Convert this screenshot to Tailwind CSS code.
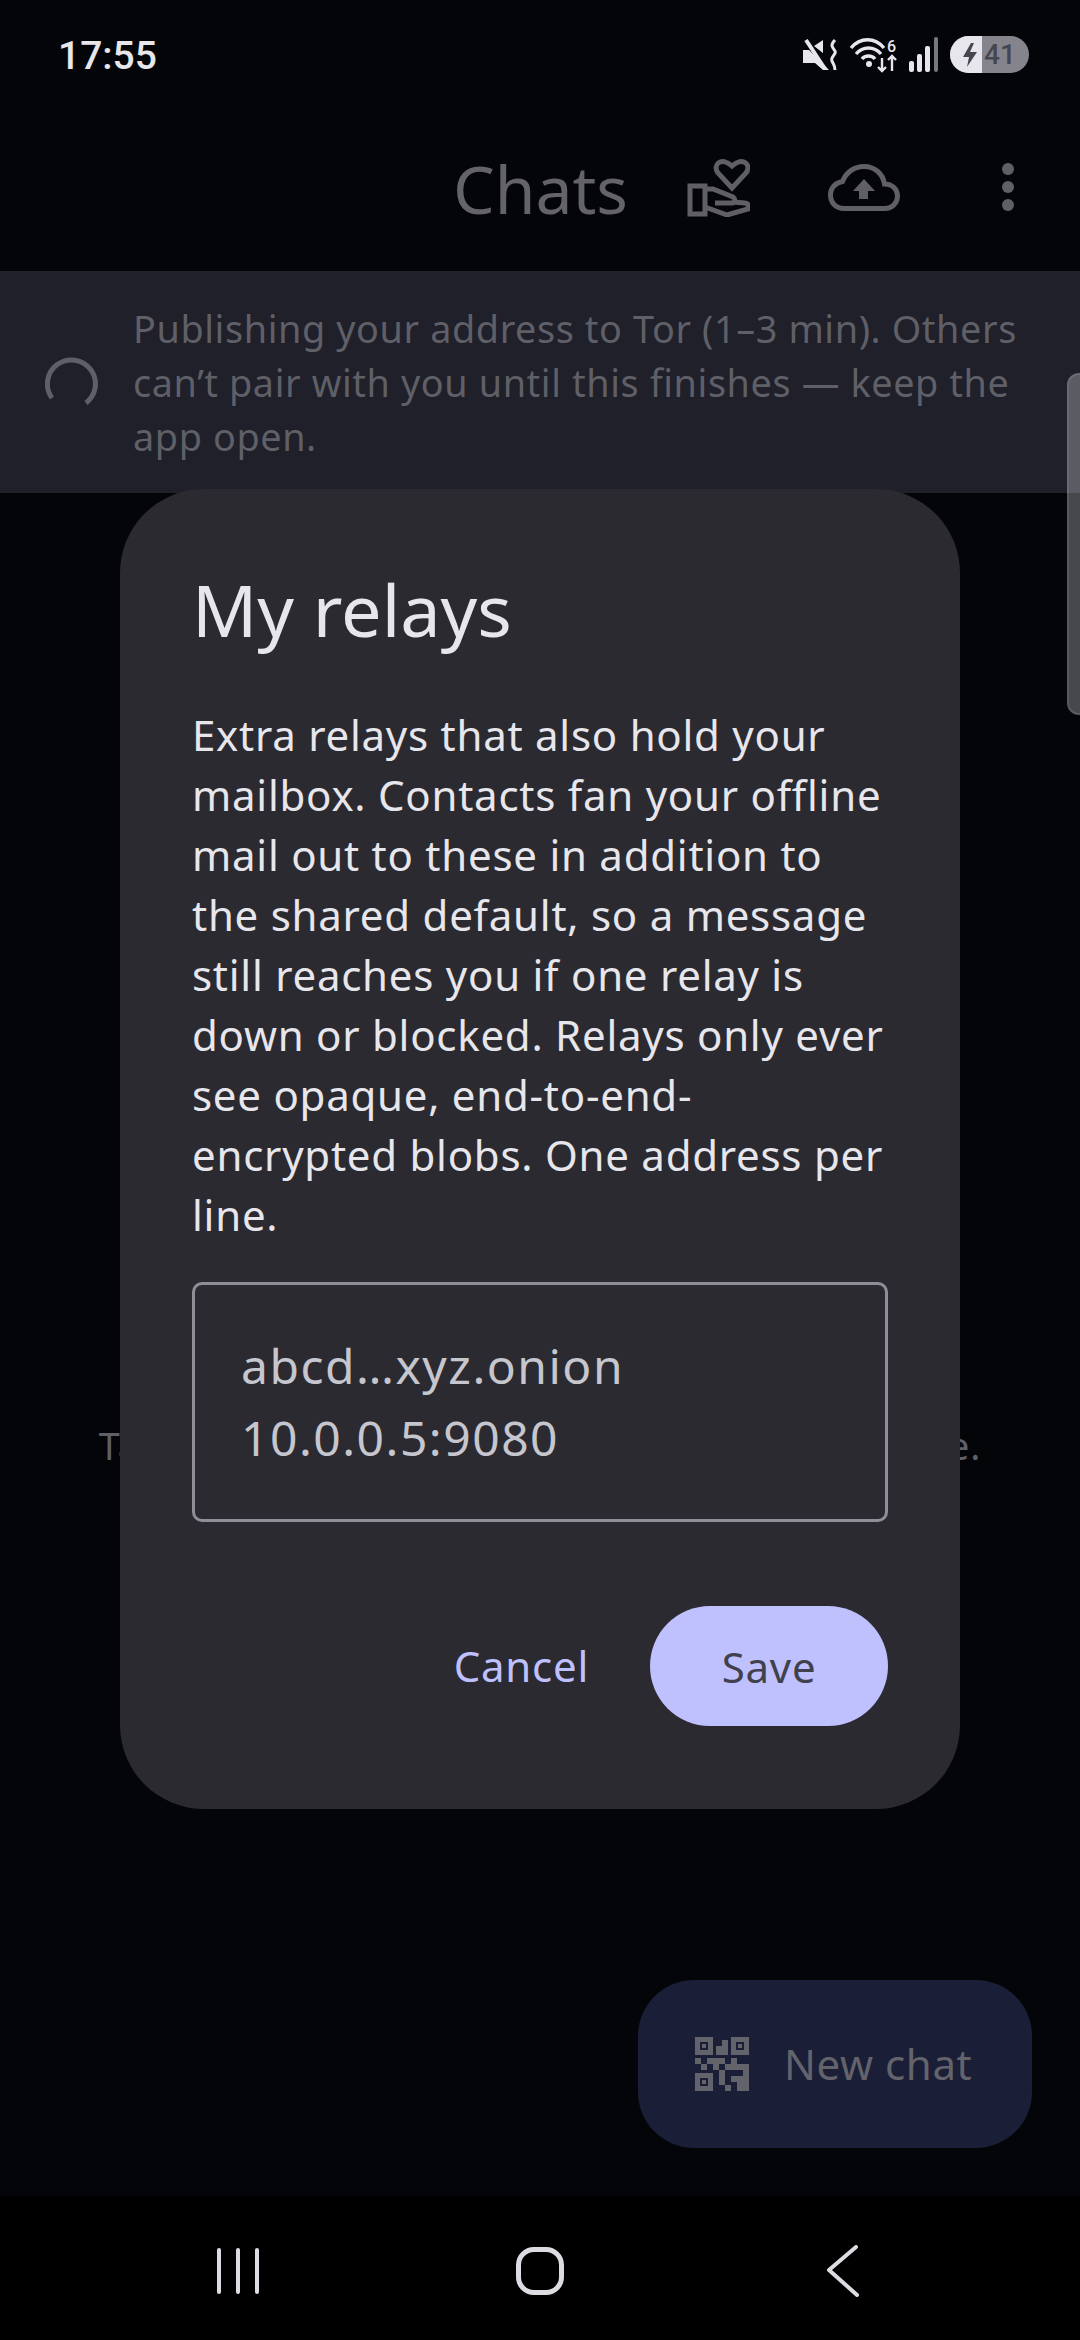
<!DOCTYPE html>
<html lang="en">
<head>
  <meta charset="UTF-8" />
  <meta name="viewport" content="width=device-width, initial-scale=1" />
  <title>My relays</title>
  <script src="https://cdn.jsdelivr.net/npm/@tailwindcss/browser@4"></script>
</head>
<body class="bg-[#040508] font-['Noto_Sans',sans-serif]">
  <div class="relative w-[1080px] h-[2340px] overflow-hidden flex flex-col bg-[#040508]">

    <!-- status bar -->
    <div class="h-[90px] shrink-0 flex justify-between pl-[58px] pr-[51px] pt-[35px]">
      <span class="font-['Roboto',sans-serif] font-medium text-[39px] leading-[42px] text-[#e6e6ec]">17:55</span>
      <div class="flex items-start gap-[11px] pt-[1px]">
        <svg class="w-[36px] h-[34px] mt-[2px]" viewBox="0 0 36 32" fill="#e6e6ec">
          <path d="M0 11h6l20 20h-6l-8-7H0zM11 7l9-6v13z"/>
          <path d="M3 1l19 29" stroke="#e6e6ec" stroke-width="4"/>
          <path d="M32 1c-5 5-3 7 0 11 2 3-5 6-3 10 1 3 3 4 3 9" fill="none" stroke="#e6e6ec" stroke-width="3"/>
        </svg>
        <svg class="w-[48px] h-[34px] mt-[2px] overflow-visible" viewBox="0 0 48 34" fill="none" stroke="#e6e6ec" stroke-width="3.4">
          <path d="M1 10c9-11 24-11 33 0M6 16c7-8 18-8 25 0M12 21c3-4 10-4 13 0"/>
          <circle cx="19" cy="26" r="3" fill="#e6e6ec" stroke="none"/>
          <path d="M32 20v13M28 29l4 4 4-4M42 33V18M38 22l4-4 4 4" stroke-width="2.4"/>
          <text x="37" y="14" font-size="16" font-family="Roboto" font-weight="500" fill="#e6e6ec" stroke="none">6</text>
        </svg>
        <svg class="w-[30px] h-[35px] mt-[1px]" viewBox="0 0 30 35" fill="#e6e6ec">
          <rect x="0" y="24" width="5" height="11" rx="2"/><rect x="8" y="17" width="5" height="18" rx="2"/><rect x="16" y="9" width="5" height="26" rx="2"/>
          <rect x="25" y="0" width="4" height="35" rx="2" fill="#77777f"/>
        </svg>
        <div class="w-[79px] h-[37px] rounded-full overflow-hidden flex bg-[#85848d]">
          <div class="w-[32px] h-full bg-[#e6e6ec] flex items-center justify-end pr-[4px]">
            <svg class="w-[16px] h-[24px]" viewBox="0 0 16 24" fill="#46464e"><path d="M9 0L1 14h6l-2 10 10-15H8l4-9z"/></svg>
          </div>
          <span class="font-['Roboto',sans-serif] font-medium text-[28px] leading-[37px] text-[#46464e] pl-[2px]">41</span>
        </div>
      </div>
    </div>

    <!-- top app bar -->
    <div class="h-[181px] shrink-0 flex items-center pt-[13px]">
      <span class="ml-[453px] w-[172px] text-[66px] leading-[80px] whitespace-nowrap text-[#636369] pt-[1px]">Chats</span>
      <svg class="ml-[62px] w-[63px] h-[60px]" viewBox="0 0 63 60" fill="none" stroke="#5f5f65" stroke-width="5">
        <path d="M45 31L31 16c-6-8 3-17 14-7 11-10 20-1 14 7z"/>
        <path d="M3 29h15v28H3zM18 32h8l20 8c3 2 2 6-1 6H28M18 50l22 8 21-6c1-3 0-6-3-6l-13-1"/>
      </svg>
      <svg class="ml-[78px] w-[72px] h-[47px]" viewBox="0 0 72 47" fill="none" stroke="#5f5f65" stroke-width="5">
        <path d="M16 44.500C8 44.500 2.500 39 2.500 31c0-8 6-12.500 12-13.500C18 8.500 26 2.500 36 2.500c11 0 19 7.500 20.500 17.500 8 0 13 5.500 13 12s-5 12.500-13 12.500z"/>
        <path d="M36 15L25 27h6v8h9v-8h7z" fill="#5f5f65" stroke="none"/>
      </svg>
      <svg class="ml-[102px] w-[12px] h-[48px]" viewBox="0 0 12 48" fill="#5f5f65">
        <circle cx="6" cy="6" r="6"/><circle cx="6" cy="24" r="6"/><circle cx="6" cy="42" r="6"/>
      </svg>
    </div>

    <!-- tor banner -->
    <div class="h-[222px] shrink-0 bg-[#1f2029] flex items-center pl-[45px]">
      <svg class="w-[53px] h-[50px] shrink-0" viewBox="0 0 53 50" fill="none" stroke="#5f5f67" stroke-width="5">
        <path d="M7 41A24 24 0 1 1 41 46"/>
      </svg>
      <p class="ml-[35px] pt-[2px] text-[37.800px] leading-[54px] text-[#5f5f67] tracking-[0.6px] whitespace-nowrap">Publishing your address to Tor (1–3 min). Others<br />can’t pair with you until this finishes — keep the<br />app open.</p>
    </div>

    <!-- empty state behind the dialog -->
    <div class="flex-1 flex flex-col items-center pt-[926px]">
      <p class="text-[37.800px] leading-[54px] text-[#5f5f67] tracking-[0.93px] whitespace-nowrap">Tap New chat to start pairing up with someone.</p>
    </div>

    <!-- nav bar -->
    <div class="h-[144px] shrink-0 bg-black flex items-center pt-[5px]">
      <div class="ml-[217px] flex gap-[15px] h-[46px]">
        <div class="w-[4px] h-full bg-[#dcdce2] rounded-full"></div>
        <div class="w-[4px] h-full bg-[#dcdce2] rounded-full"></div>
        <div class="w-[4px] h-full bg-[#dcdce2] rounded-full"></div>
      </div>
      <div class="ml-[257px] w-[48px] h-[48px] border-[5px] border-[#dcdce2] rounded-[18px]"></div>
      <svg class="ml-[262px] w-[34px] h-[52px]" viewBox="0 0 34 52" fill="none" stroke="#dcdce2" stroke-width="4" stroke-linecap="round" stroke-linejoin="round">
        <path d="M30 2L3 25l28 25"/>
      </svg>
    </div>

    <!-- scrollbar -->
    <div class="absolute top-[373px] right-0 w-[13px] h-[342px] bg-[#e6e6ec]/30 border-l-2 border-y-2 border-white/10 rounded-l-[12px]"></div>

    <!-- new chat fab -->
    <div class="absolute left-[638px] top-[1980px] w-[394px] h-[168px] rounded-[56px] bg-[#1b1e37] flex items-center pl-[57px]">
      <svg class="w-[54px] h-[54px]" viewBox="0 0 54 54" fill="#63636c" shape-rendering="crispEdges">
        <path fill-rule="evenodd" d="M0 0h18v18H0zM5 5v8h8V5zM36 0h18v18H36zM41 5v8h8V5zM0 36h18v18H0zM5 41v8h8v-8z"/>
        <rect x="7" y="7" width="4" height="4"/><rect x="43" y="7" width="4" height="4"/><rect x="7" y="43" width="4" height="4"/>
        <path d="M21 9h6V3h6v15H21z"/>
        <rect x="0" y="21" width="6" height="6"/><rect x="6" y="27" width="6" height="6"/><rect x="12" y="21" width="18" height="6"/><rect x="18" y="27" width="6" height="6"/>
        <rect x="36" y="21" width="6" height="6"/><rect x="30" y="27" width="18" height="6"/><rect x="48" y="27" width="6" height="18"/>
        <rect x="24" y="33" width="6" height="15"/><rect x="36" y="39" width="12" height="6"/><rect x="42" y="45" width="12" height="9"/><rect x="30" y="48" width="6" height="6"/>
      </svg>
      <span class="ml-[35px] text-[42px] leading-[56px] tracking-[0.6px] text-[#63636c]">New chat</span>
    </div>

    <!-- dialog -->
    <div class="absolute left-[120px] top-[489px] w-[840px] h-[1320px] rounded-[84px] bg-[#2b2a30] px-[72px] pt-[73px] flex flex-col">
      <h2 class="text-[72px] leading-[96px] text-[#e6e6ec] -mt-[1px]">My relays</h2>
      <p class="mt-[48px] text-[42px] leading-[60px] tracking-[0.75px] whitespace-nowrap text-[#e6e6ec]">Extra relays that also hold your<br />mailbox. Contacts fan your offline<br />mail out to these in addition to<br />the shared default, so a message<br />still reaches you if one relay is<br />down or blocked. Relays only ever<br />see opaque, end-to-end-<br />encrypted blobs. One address per<br />line.</p>
      <div class="mt-[37px] h-[240px] rounded-[10px] border-[3px] border-[#8e8e96] px-[46px] py-[45px] text-[48px] leading-[72px] tracking-[1.5px] text-[#c6c6ce]">abcd…xyz.onion<br />10.0.0.5:9080</div>
      <div class="mt-[84px] flex items-center justify-end">
        <span class="text-[42px] leading-[56px] tracking-[0.75px] text-[#bfc1ff]">Cancel</span>
        <div class="ml-[61px] w-[238px] h-[120px] rounded-full bg-[#bfc1ff] flex items-center justify-center text-[42px] tracking-[0.75px] text-[#41414e]">Save</div>
      </div>
    </div>
  </div>
</body>
</html>
